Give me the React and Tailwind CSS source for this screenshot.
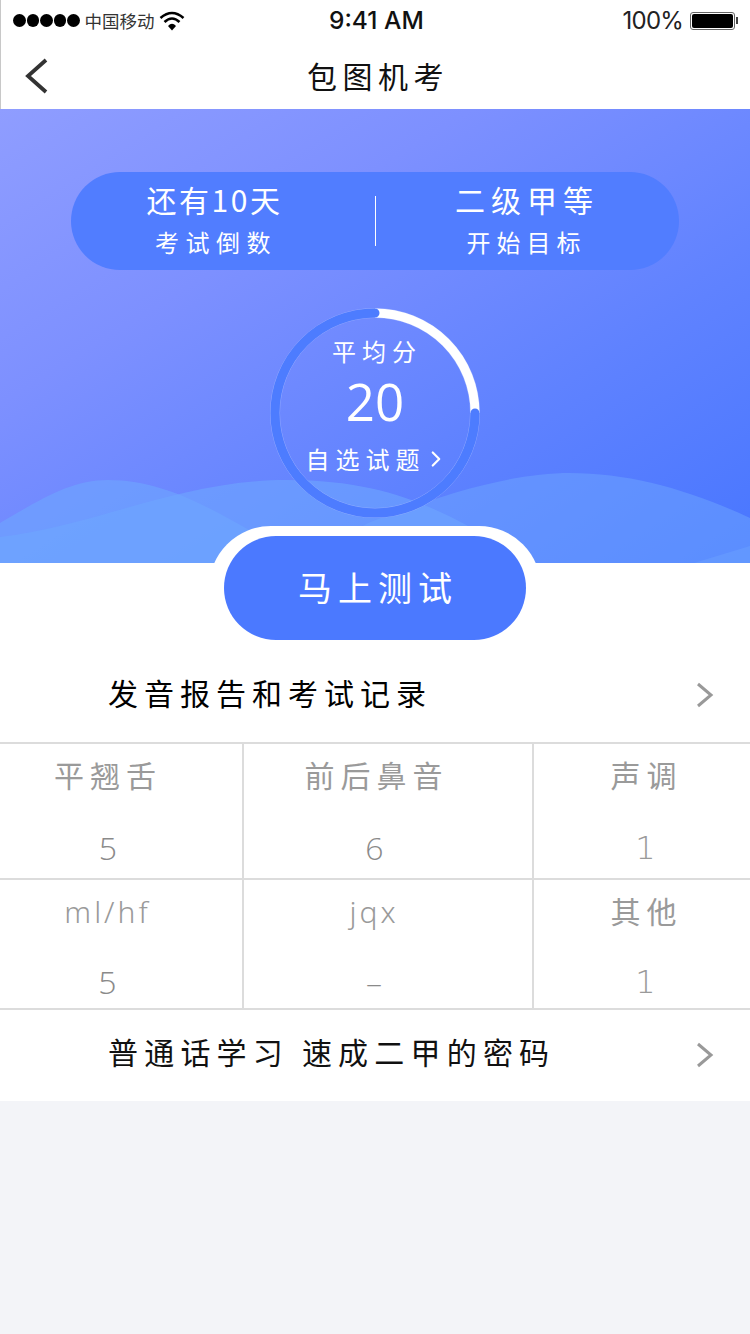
import { ChevronRight } from 'lucide-react';

const cells = [
  { label: '平翘舌', value: '5', pad: 'pr-[26px]', labelClass: 'tracking-[6px] mt-[10px]', valueClass: "font-['Open_Sans'] font-light text-[#8a8a8a] mt-[34px]" },
  { label: '前后鼻音', value: '6', pad: 'pr-[23px]', labelClass: 'tracking-[6px] mt-[10px]', valueClass: "font-['Open_Sans'] font-light text-[#8a8a8a] mt-[34px] -ml-[4px]" },
  { label: '声调', value: '1', pad: 'pl-[9px]', labelClass: 'tracking-[6px] mt-[10px]', valueClass: "font-['DejaVu_Sans'] font-extralight text-[30px] mt-[34px] -ml-[2px]" },
  { label: 'ml/hf', value: '5', pad: 'pr-[27px]', labelClass: "tracking-[3px] font-['Noto_Sans'] font-light mt-[12px]", valueClass: "font-['Open_Sans'] font-light text-[#8a8a8a] mt-[30px]" },
  { label: 'jqx', value: '–', pad: 'pr-[28px]', labelClass: "tracking-[3px] font-['Noto_Sans'] font-light mt-[12px]", valueClass: "font-['Open_Sans'] font-light text-[#8a8a8a] mt-[30px]" },
  { label: '其他', value: '1', pad: 'pl-[9px]', labelClass: 'tracking-[6px] mt-[10px]', valueClass: "font-['DejaVu_Sans'] font-extralight text-[30px] mt-[32px] -ml-[2px]" },
];

function Arrow() {
  return (
    <svg width="20" height="28" viewBox="0 0 20 28" className="absolute right-[35px] top-[31px]">
      <path d="M3 3 L16 14 L3 25" fill="none" stroke="#999" strokeWidth="3" />
    </svg>
  );
}

function StatusBar() {
  return (
    <div className="h-[41px] flex items-center justify-between pl-[12px] pr-[12px] relative text-black font-['Inter',sans-serif]">
      <div className="flex items-center">
        <div className="flex gap-[1px]">
          {[0, 1, 2, 3, 4].map(i => <span key={i} className="w-[12.5px] h-[12.5px] rounded-full bg-black" />)}
        </div>
        <span className="ml-[5px] text-[17.5px] leading-none text-[#333] font-['Noto_Sans_CJK_SC',sans-serif]">中国移动</span>
        <svg width="26" height="20" viewBox="0 0 26 20" className="ml-[4px]">
          <path d="M1.5 7 Q13 -3 24.5 7" fill="none" stroke="#000" strokeWidth="2.6" />
          <path d="M5.5 11 Q13 4 20.5 11" fill="none" stroke="#000" strokeWidth="2.6" />
          <path d="M9 15 Q13 10.5 17 15 L13 19.5 Z" fill="#000" />
        </svg>
      </div>
      <span className="absolute left-[328px] text-[24.5px] leading-none font-medium text-[#111]">9:41 AM</span>
      <div className="flex items-center">
        <span className="text-[24px] leading-none tracking-[-0.8px] text-[#222]">100%</span>
        <div className="ml-[7px] w-[45px] h-[18px] rounded-[3px] border border-[#666] p-[1px]">
          <div className="w-full h-full rounded-[2px] bg-black" />
        </div>
        <span className="ml-[1px] w-[2px] h-[7px] bg-[#444]" />
      </div>
    </div>
  );
}

export default function App() {
  return (
    <div className="w-[750px] h-[1334px] bg-[#f3f4f8] overflow-hidden font-['Noto_Sans_CJK_SC',sans-serif]">
      <div className="bg-white border-l border-[#c8c8c8]">
        <StatusBar />
        <div className="h-[68px] flex items-center justify-center relative">
          <svg width="28" height="38" viewBox="0 0 28 38" className="absolute left-[21px] top-[16px]">
            <path d="M24 3 L6 19 L24 35" fill="none" stroke="#333" strokeWidth="3.8" />
          </svg>
          <span className="text-[30px] leading-none tracking-[5.5px] text-[#111] ml-[5px]">包图机考</span>
        </div>
      </div>

      <div className="relative h-[454px] bg-[linear-gradient(148deg,#8f9dff_0%,#7d90ff_32%,#5f82ff_68%,#4876ff_100%)] pt-[63px]">
        <svg className="absolute left-0 bottom-0" width="750" height="90" viewBox="0 473 750 90">
          <path d="M0 523 C40 500 70 480 108 480 C160 480 205 505 249 530 C275 545 290 555 306 563 L0 563 Z" fill="#6ea6ff" fillOpacity="0.6" />
          <path d="M0 537 C100 525 180 480 287 480 C370 480 420 500 470 527 C495 541 515 553 530 563 L0 563 Z" fill="#6ea6ff" fillOpacity="0.6" />
          <path d="M368 523 C440 495 510 473 570 473 C630 473 690 490 750 518 L750 563 L300 563 Z" fill="#6ea6ff" fillOpacity="0.5" />
          <path d="M694 563 L750 546 L750 563 Z" fill="#6ea6ff" fillOpacity="0.4" />
        </svg>

        <div className="relative mx-[71px] h-[98px] rounded-[49px] bg-[#517dff] flex items-center text-white">
          <div className="w-[304px] text-center pr-[17px]">
            <div className="text-[30px] leading-[36px] tracking-[2.5px] -mt-[6px]">还有10天</div>
            <div className="text-[24px] leading-[28px] mt-[11px] tracking-[6.5px] pl-[3px]">考试倒数</div>
          </div>
          <div className="w-[1px] h-[50px] bg-white" />
          <div className="flex-1 text-center">
            <div className="text-[30px] leading-[36px] tracking-[6px] -mt-[6px] -ml-[1px]">二级甲等</div>
            <div className="text-[24px] leading-[28px] mt-[11px] tracking-[6px] -ml-[2px]">开始目标</div>
          </div>
        </div>

        <div className="relative w-[210px] h-[210px] mx-auto mt-[38px] text-white text-center">
          <svg className="absolute inset-0" width="210" height="210" viewBox="0 0 210 210">
            <circle cx="105" cy="105" r="104.5" fill="none" stroke="#a9bcff" strokeWidth="0.6" />
            <circle cx="105" cy="105" r="95.5" fill="none" stroke="#a9bcff" strokeWidth="0.6" />
            <path d="M105 5 A100 100 0 0 1 205 105" fill="none" stroke="#fff" strokeWidth="9" />
            <path d="M205 105 A100 100 0 1 1 105 5" fill="none" stroke="#4d7cff" strokeWidth="9" strokeLinecap="round" />
          </svg>
          <div className="relative pt-[28px]">
            <div className="text-[24px] leading-[30px] tracking-[6px] pl-[4px]">平均分</div>
            <div className="text-[51px] leading-[60px] mt-[5px] font-['Open_Sans']">20</div>
            <div className="flex items-center justify-center mt-[13px] pr-[4px]">
              <span className="text-[24px] leading-[30px] tracking-[6px]">自选试题</span>
              <ChevronRight size={26} strokeWidth={2} className="-ml-[3px] -mr-[8px]" />
            </div>
          </div>
        </div>
      </div>

      <div className="bg-white h-[538px] flex flex-col">
        <div className="relative w-[332px] mx-auto -mt-[37px] rounded-[62px] bg-white px-[15px] py-[10px]">
          <div className="h-[104px] rounded-[52px] bg-[#4b79ff] flex items-center justify-center text-white text-[34px] tracking-[6px] pl-[6px] pb-[4px]">
            马上测试
          </div>
        </div>

        <div className="relative h-[92px] flex items-center pl-[108px] pb-[8px] text-[30px] leading-none tracking-[6px] text-black">
          发音报告和考试记录
          <Arrow />
        </div>

        <div className="grid grid-cols-[244px_290px_216px] border-t-2 border-[#dcdcdc] text-[#9a9a9a]">
          {cells.map((c, i) => (
            <div key={i} className={`text-center border-[#dcdcdc] border-b-2 ${i % 3 !== 2 ? 'border-r-2' : ''} ${i < 3 ? 'h-[136px]' : 'h-[130px]'} ${c.pad}`}>
              <div className={`text-[30px] leading-[40px] ${c.labelClass}`}>{c.label}</div>
              <div className={`text-[32px] leading-[40px] ${c.valueClass}`}>{c.value}</div>
            </div>
          ))}
        </div>

        <div className="relative h-[91px] flex items-center pl-[108px] text-[30px] leading-none tracking-[6.2px] text-[#111] pb-[10px]">
          普通话学习 速成二甲的密码
          <Arrow />
        </div>
      </div>
    </div>
  );
}
